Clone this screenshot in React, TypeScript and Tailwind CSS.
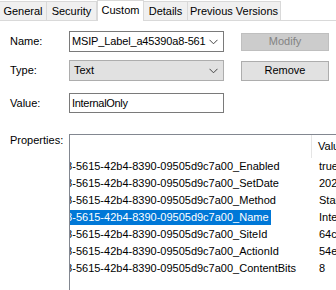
import React from "react";

const font = { fontFamily: "'Liberation Sans', Arial, sans-serif" };

const tabs = ["General", "Security", "Custom", "Details", "Previous Versions"];
const tabWidths = ["w-[47px]", "w-[50px]", "w-[47px]", "w-[44px]", "w-[93px]"];

const rows = [
  { name: "Enabled", value: "true" },
  { name: "SetDate", value: "2023-05-10T08:12:44Z" },
  { name: "Method", value: "Standard" },
  { name: "Name", value: "InternalOnly", selected: true },
  { name: "SiteId", value: "64c2a1f0-2b1e" },
  { name: "ActionId", value: "54e0d7c1-9f3a" },
  { name: "ContentBits", value: "8" },
];

function Chevron() {
  return (
    <svg width="9" height="6" viewBox="0 0 9 6" className="shrink-0">
      <path d="M0.5 0.8 L4.5 4.8 L8.5 0.8" fill="none" stroke="#444" strokeWidth="1" />
    </svg>
  );
}

export default function App() {
  return (
    <div
      className="relative h-[290px] w-[336px] overflow-hidden bg-white text-[11px] leading-none text-black"
      style={font}
    >
      {/* tab strip */}
      <div className="flex h-[21px] items-end border-b border-[#d9d9d9]">
        {tabs.map((t, i) =>
          t === "Custom" ? (
            <div
              key={t}
              className={`${tabWidths[i]} -mb-px flex h-[21px] shrink-0 items-center justify-center border-x border-t border-[#d9d9d9] bg-white pb-[2px]`}
            >
              {t}
            </div>
          ) : (
            <div
              key={t}
              className={`${tabWidths[i]} flex h-[19px] shrink-0 items-center justify-center border-r border-t border-[#d9d9d9] bg-[#f0f0f0]`}
            >
              {t}
            </div>
          )
        )}
      </div>

      <div className="pl-[10px]">
        {/* Name */}
        <div className="mt-[10px] flex h-[21px] items-center">
          <div className="w-[59px] shrink-0">Name:</div>
          <div className="flex h-[21px] w-[155px] shrink-0 items-center justify-between overflow-hidden border border-[#7a7a7a] bg-white pl-[2px] pr-[5px]">
            <span className="whitespace-nowrap tracking-[-0.15px]">MSIP_Label_a45390a8-561</span>
            <Chevron />
          </div>
          <div className="ml-[17px] flex h-[18px] w-[88px] shrink-0 items-center justify-center border border-[#bfbfbf] bg-[#cccccc] text-[#838383]">
            Modify
          </div>
        </div>

        {/* Type */}
        <div className="mt-[8px] flex h-[21px] items-center">
          <div className="w-[59px] shrink-0">Type:</div>
          <div className="flex h-[21px] w-[155px] shrink-0 items-center justify-between border border-[#adadad] bg-[#e1e1e1] pl-[4px] pr-[5px]">
            <span>Text</span>
            <Chevron />
          </div>
          <div className="ml-[17px] flex h-[20px] w-[88px] shrink-0 items-center justify-center border border-[#adadad] bg-[#e1e1e1]">
            Remove
          </div>
        </div>

        {/* Value */}
        <div className="mt-[12px] flex h-[20px] items-center">
          <div className="w-[59px] shrink-0">Value:</div>
          <div className="flex h-[20px] w-[155px] shrink-0 items-center border border-[#7a7a7a] bg-white pl-[2px] tracking-[-0.3px]">
            InternalOnly
          </div>
        </div>

        {/* Properties */}
        <div className="mt-[21px] flex">
          <div className="w-[59px] shrink-0 pt-[1px]">Properties:</div>
          <div className="h-[170px] w-[300px] shrink-0 overflow-hidden border border-[#828790] bg-white">
            <div className="flex h-[23px]">
              <div className="w-[242px] shrink-0 border-r border-[#e5e5e5]" />
              <div className="flex items-center whitespace-nowrap pl-[6px]">Value</div>
            </div>
            {rows.map((r) => (
              <div key={r.name} className="flex h-[17px] items-center">
                <div className="w-[243px] shrink-0 overflow-hidden">
                  <span
                    className={`-ml-[10px] inline-flex h-[15px] items-center whitespace-nowrap pr-[2px] ${
                      r.selected ? "bg-[#0078d7] text-white" : ""
                    }`}
                  >
                    a8-5615-42b4-8390-09505d9c7a00_{r.name}
                  </span>
                </div>
                <div className="shrink-0 whitespace-nowrap pl-[6px]">{r.value}</div>
              </div>
            ))}
          </div>
        </div>
      </div>
    </div>
  );
}
